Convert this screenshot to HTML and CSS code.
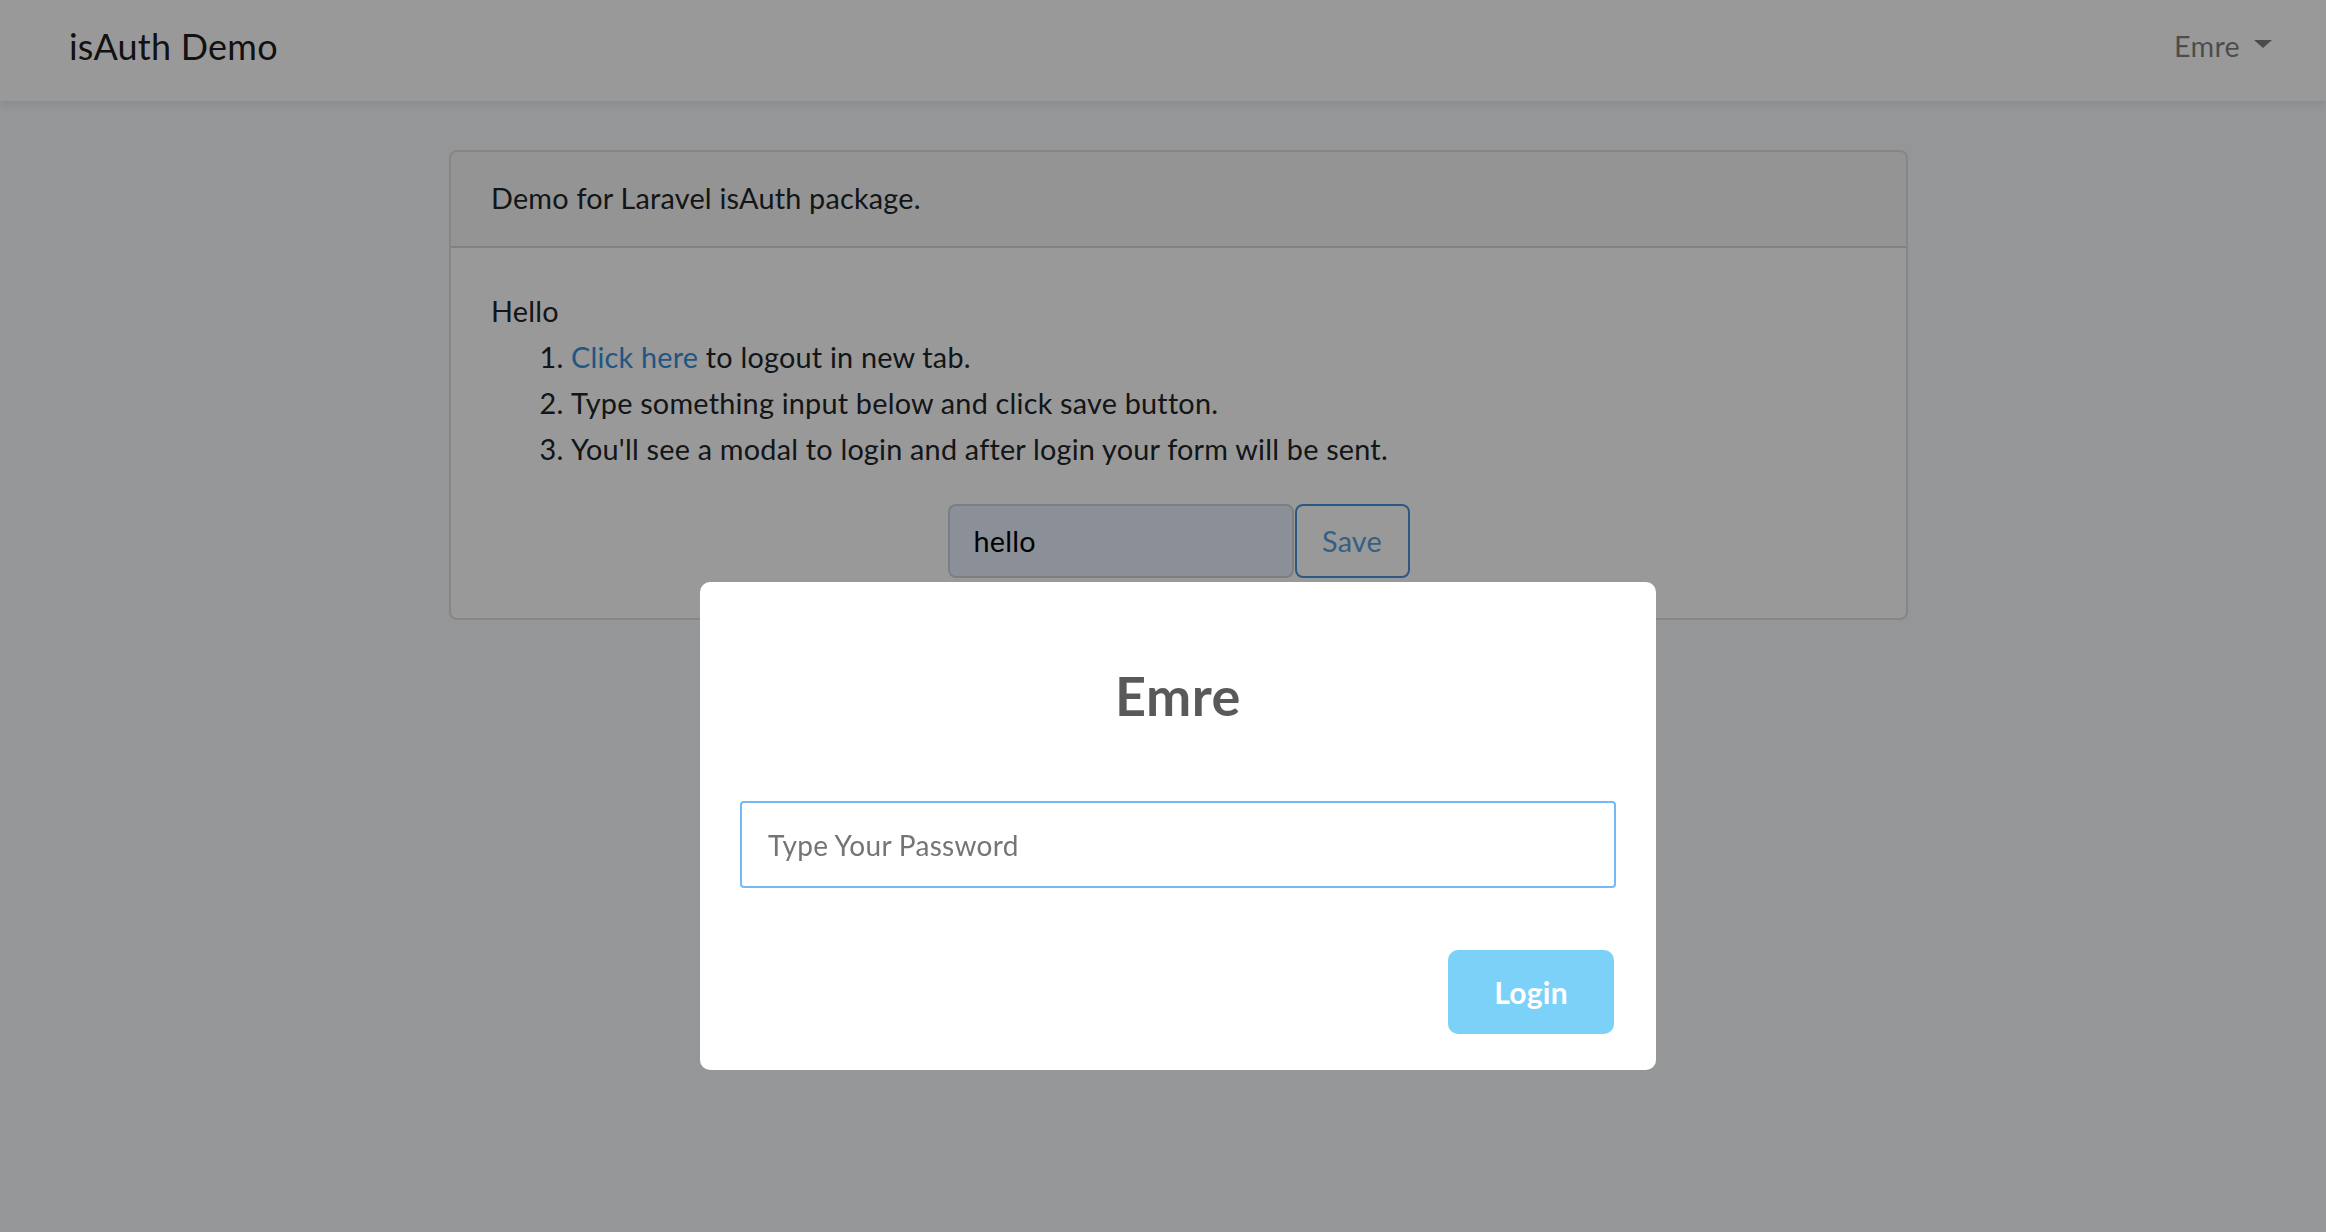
FILE: index.html
```html
<!DOCTYPE html>
<html lang="en">
<head>
<meta charset="utf-8">
<title>isAuth Demo</title>
<link rel="stylesheet" href="styles.css">
</head>
<body>
<nav class="navbar">
  <a class="brand">isAuth Demo</a>
  <a class="user">Emre<span class="caret"></span></a>
</nav>
<main class="main">
  <div class="card">
    <div class="card-header">Demo for Laravel isAuth package.</div>
    <div class="card-body">
      <div class="hello">Hello</div>
      <ol class="steps">
        <li><a class="link">Click here</a> to logout in new tab.</li>
        <li>Type something input below and click save button.</li>
        <li>You'll see a modal to login and after login your form will be sent.</li>
      </ol>
      <div class="save-form">
        <input class="field" type="text" value="hello">
        <button class="btn-save" type="button">Save</button>
      </div>
    </div>
  </div>
</main>
<div class="overlay">
  <div class="modal">
    <div class="modal-title">Emre</div>
    <div class="modal-content">
      <input class="pw" type="password" placeholder="Type Your Password">
    </div>
    <div class="modal-footer">
      <button class="btn-login" type="button">Login</button>
    </div>
  </div>
</div>
</body>
</html>
```

FILE: styles.css
```css
* { box-sizing: border-box; }

html, body {
  margin: 0;
  padding: 0;
}

body {
  background: #f8fafc;
  color: #212529;
  font-family: Lato, "Open Sans", sans-serif;
  font-size: 28.8px;
  line-height: 1.6;
  letter-spacing: 0.22px;
  min-height: 1232px;
}

.navbar {
  display: flex;
  justify-content: space-between;
  align-items: flex-start;
  height: 101px;
  padding: 0 54px 0 69px;
  background: #fff;
  box-shadow: 0 4px 8px rgba(0, 0, 0, 0.075);
}

.brand {
  margin-top: 28px;
  font-size: 36px;
  line-height: 36px;
  color: rgba(0, 0, 0, 0.9);
}

.user {
  display: flex;
  align-items: center;
  margin-top: 32px;
  line-height: 29px;
  color: rgba(0, 0, 0, 0.5);
}

.caret {
  display: inline-block;
  width: 0;
  height: 0;
  margin-left: 14px;
  margin-top: -6px;
  border-top: 8px solid rgba(0, 0, 0, 0.5);
  border-left: 9px solid transparent;
  border-right: 9px solid transparent;
}

.main {
  padding: 49px 0 0 449px;
}

.card {
  width: 1459px;
  background: #fff;
  border: 2px solid rgba(0, 0, 0, 0.125);
  border-radius: 8px;
  overflow: hidden;
}

.card-header {
  padding: 23px 40px 25px;
  background: rgba(0, 0, 0, 0.03);
  border-bottom: 2px solid rgba(0, 0, 0, 0.125);
}

.card-body {
  padding: 40px;
}

.steps {
  margin: 0 0 32px;
  padding-left: 80px;
}

.link {
  color: #3490dc;
}

.save-form {
  display: flex;
  justify-content: center;
  gap: 1px;
}

.field {
  width: 346px;
  height: 74px;
  padding: 12px 24px;
  border: 2px solid #ced4da;
  border-radius: 8px;
  background: #e8f0fe;
  color: #000;
  font: inherit;
  letter-spacing: inherit;
  outline: none;
}

.btn-save {
  width: 115px;
  height: 74px;
  padding: 0;
  border: 2px solid #4a95d8;
  border-radius: 8px;
  background: transparent;
  color: #5a9fdc;
  font: inherit;
  letter-spacing: inherit;
}

.overlay {
  position: fixed;
  inset: 0;
  background: rgba(0, 0, 0, 0.4);
}

.modal {
  position: absolute;
  left: 700px;
  top: 582px;
  width: 956px;
  background: #fff;
  border-radius: 10px;
  text-align: center;
}

.modal-title {
  margin-top: 51px;
  padding: 26px 32px;
  font-size: 54px;
  line-height: 74px;
  font-weight: 700;
  color: rgba(0, 0, 0, 0.65);
  letter-spacing: 0.5px;
}

.modal-content {
  margin-top: 42px;
  padding: 0 40px;
}

.pw {
  display: block;
  width: 100%;
  height: 87px;
  padding: 0 26px;
  border: 2px solid #74b8f7;
  border-radius: 4px;
  background: #fff;
  font-family: Lato, "Open Sans", sans-serif;
  font-size: 28px;
  letter-spacing: 0.3px;
  color: #333;
  outline: none;
}

.pw::placeholder {
  color: #757575;
}

.modal-footer {
  margin-top: 26px;
  padding: 26px 32px 26px;
  text-align: right;
}

.btn-login {
  margin: 10px;
  height: 84px;
  padding: 0 46px;
  border: none;
  border-radius: 10px;
  background: #7cd1f9;
  color: #fff;
  font-family: Lato, "Open Sans", sans-serif;
  font-size: 30px;
  font-weight: 700;
  letter-spacing: 0.3px;
}
```
